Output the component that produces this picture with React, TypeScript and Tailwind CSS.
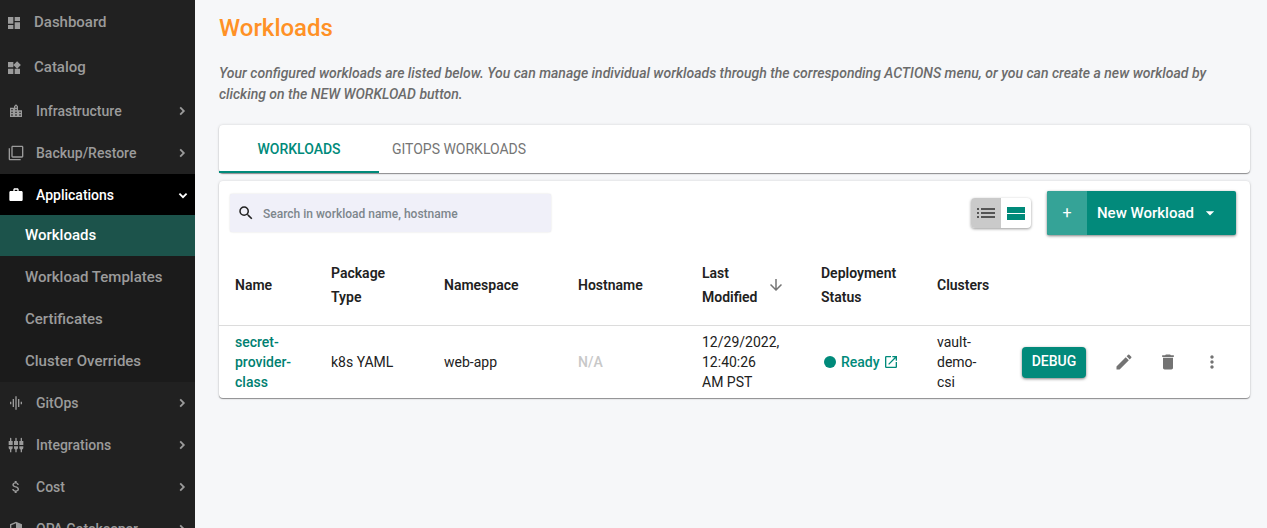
import React, { useState } from "react";
import {
    MdArrowDownward,
    MdArrowDropDown,
    MdAttachMoney,
    MdDashboard,
    MdDelete,
    MdEdit,
    MdFilterNone,
    MdGraphicEq,
    MdLocationCity,
    MdMoreVert,
    MdOpenInNew,
    MdSearch,
    MdSecurity,
    MdSettingsInputComponent,
    MdWidgets,
    MdWork,
} from "react-icons/md";
import type { IconType } from "react-icons";

type Workload = {
    name: string;
    packageType: string;
    namespace: string;
    hostname?: string;
    lastModified: string;
    status: string;
    cluster: string;
};

const workloads: Workload[] = [
    {
        name: "secret-provider-class",
        packageType: "k8s YAML",
        namespace: "web-app",
        lastModified: "12/29/2022, 12:40:26 AM PST",
        status: "Ready",
        cluster: "vault-demo-csi",
    },
];

const appLinks = ["Workloads", "Workload Templates", "Certificates", "Cluster Overrides"];

const Chevron: React.FC<{ open?: boolean }> = ({ open }) => (
    <svg viewBox="0 0 16 16" className="ml-auto size-4" fill="none" stroke="currentColor" strokeWidth="1.8">
        <path d={open ? "M4.4 6.6 8 10.2l3.6-3.6" : "M6.2 4.4 9.8 8l-3.6 3.6"} />
    </svg>
);

const TopLink: React.FC<{ icon: IconType; label: string }> = ({ icon: Icon, label }) => (
    <a href="#" className="flex h-[45px] shrink-0 items-center pl-[6px] text-[15px]">
        <Icon className="mr-3 size-4" />
        {label}
    </a>
);

const GroupButton: React.FC<{ icon: IconType; label: string }> = ({ icon: Icon, label }) => (
    <button className="flex h-[42px] w-full shrink-0 items-center pr-[5px] pl-2">
        <Icon className="mr-3 size-4" />
        {label}
        <Chevron />
    </button>
);

const Sidebar: React.FC = () => (
    <nav className="flex w-[195px] shrink-0 flex-col overflow-hidden bg-[#212121] text-sm font-medium text-[#9b9b9b]">
        <TopLink icon={MdDashboard} label="Dashboard" />
        <TopLink icon={MdWidgets} label="Catalog" />
        <GroupButton icon={MdLocationCity} label="Infrastructure" />
        <GroupButton icon={MdFilterNone} label="Backup/Restore" />

        <button className="flex h-[41px] w-full shrink-0 items-center bg-black pr-1 pl-2 text-white">
            <MdWork className="mr-3 size-4" />
            Applications
            <Chevron open />
        </button>
        <div className="flex shrink-0 flex-col gap-px bg-[#1b1b1b] text-[15px]">
            {appLinks.map((label) => (
                <a
                    key={label}
                    href="#"
                    className={`flex h-[41px] items-center pl-[25px] ${
                        label === "Workloads" ? "bg-[#1c534b] text-white" : ""
                    }`}
                >
                    {label}
                </a>
            ))}
        </div>

        <GroupButton icon={MdGraphicEq} label="GitOps" />
        <GroupButton icon={MdSettingsInputComponent} label="Integrations" />
        <GroupButton icon={MdAttachMoney} label="Cost" />
        <GroupButton icon={MdSecurity} label="OPA Gatekeeper" />
    </nav>
);

const ListIcon: React.FC = () => (
    <svg viewBox="0 0 18 10" className="h-[10px] w-[18px]" fill="currentColor">
        <path d="M0 0h2v2H0zM4 0h14v2H4zM0 4h2v2H0zM4 4h14v2H4zM0 8h2v2H0zM4 8h14v2H4z" />
    </svg>
);

const CardsIcon: React.FC = () => (
    <svg viewBox="0 0 18 13" className="h-[13px] w-[18px]" fill="currentColor">
        <path d="M0 0h18v6H0zM0 7h18v6H0z" />
    </svg>
);

const Toolbar: React.FC<{ query: string; onQuery: (value: string) => void }> = ({ query, onQuery }) => (
    <div className="flex items-center py-[10px] pr-[14px] pl-[11px]">
        <label className="flex h-[38px] w-[321px] items-center rounded-xs bg-[#f0f0f9] pl-[7px] shadow-[0_0_2px_rgba(0,0,0,0.15)]">
            <MdSearch className="mr-2 size-[18px] text-[#212121]" />
            <input
                type="text"
                aria-label="Search workloads"
                placeholder="Search in workload name, hostname"
                value={query}
                onChange={(e) => onQuery(e.target.value)}
                className="min-w-0 flex-1 bg-transparent pt-0.5 text-xs font-medium outline-none placeholder:text-[#7d868c]"
            />
        </label>

        <div className="mr-4 ml-auto flex overflow-hidden rounded-sm bg-white shadow-[0_1px_3px_rgba(0,0,0,0.4)]">
            <button aria-label="List view" className="flex size-[30px] items-center justify-center bg-[#cacaca] text-[#555]">
                <ListIcon />
            </button>
            <button aria-label="Card view" className="flex size-[30px] items-center justify-center text-[#008a7a]">
                <CardsIcon />
            </button>
        </div>

        <button className="flex h-11 items-center overflow-hidden rounded-xs bg-[#028a7b] pr-4 font-medium text-white shadow-[0_1px_3px_rgba(0,0,0,0.5)]">
            <span className="mr-[10px] flex h-full w-10 items-center justify-center bg-[#35a397] text-base font-normal">+</span>
            <span className="text-[15px]">New Workload</span>
            <MdArrowDropDown className="ml-[6px] size-5" />
        </button>
    </div>
);

const WorkloadRow: React.FC<{ item: Workload }> = ({ item }) => (
    <tr className="border-t border-[#dcdcdc]">
        <td className="px-4 py-1.5 font-medium">
            <a href="#" className="text-[#008071] hover:underline">{item.name}</a>
        </td>
        <td className="px-4 py-1.5">{item.packageType}</td>
        <td className="px-4 py-1.5">{item.namespace}</td>
        <td className="px-4 py-1.5">
            {item.hostname || <span className="font-medium text-[#c8c8c8]">N/A</span>}
        </td>
        <td className="py-1.5 pr-[25px] pl-4">{item.lastModified}</td>
        <td className="py-1.5 pl-[19px]">
            <a href="#" className="flex items-center font-medium text-[#008a7a]">
                <span className="mr-[5px] size-3 rounded-full bg-[#008a7a]" />
                {item.status}
                <MdOpenInNew className="ml-[3px] size-4" />
            </a>
        </td>
        <td className="px-4 py-1.5">{item.cluster}</td>
        <td className="py-1.5 pl-4">
            <div className="flex items-center text-[#737373]">
                <button className="mr-7 h-[31px] w-16 rounded-sm bg-[#028a7b] pb-0.5 font-medium text-white shadow-[0_1px_3px_rgba(0,0,0,0.5)]">
                    DEBUG
                </button>
                <div className="flex gap-6">
                    <button aria-label="Edit"><MdEdit className="size-5" /></button>
                    <button aria-label="Delete"><MdDelete className="size-5" /></button>
                    <button aria-label="More actions"><MdMoreVert className="size-5" /></button>
                </div>
            </div>
        </td>
    </tr>
);

export default function App() {
    const [tab, setTab] = useState("WORKLOADS");
    const [query, setQuery] = useState("");

    const rows = workloads.filter((w) => w.name.includes(query) || (w.hostname || "").includes(query));

    return (
        <div className="flex h-screen overflow-hidden bg-[#f6f7f9] font-[Roboto,sans-serif]">
            <Sidebar />

            <main className="min-w-0 flex-1 overflow-auto pt-3 pr-[17px] pl-6">
                <h1 className="text-2xl font-medium text-[#ff9126]">Workloads</h1>
                <p className="mt-[19px] text-sm leading-[21px] font-medium text-[#6b6b6b] italic">
                    Your configured workloads are listed below. You can manage individual workloads through the
                    corresponding ACTIONS menu, or you can create a new workload by clicking on the NEW WORKLOAD button.
                </p>

                <div className="mt-5 flex h-12 rounded-sm bg-white shadow-[0_1px_1px_rgba(0,0,0,0.4),0_0_3px_rgba(0,0,0,0.15)]">
                    {["WORKLOADS", "GITOPS WORKLOADS"].map((name) => (
                        <button
                            key={name}
                            onClick={() => setTab(name)}
                            className={`min-w-40 border-b-2 px-3 pt-0.5 text-sm ${
                                tab === name
                                    ? "border-[#008a7a] font-medium text-[#008a7a]"
                                    : "border-transparent text-[#757575]"
                            }`}
                        >
                            {name}
                        </button>
                    ))}
                </div>

                <section className="mt-2 rounded-sm bg-white shadow-[0_1px_1px_rgba(0,0,0,0.4),0_0_3px_rgba(0,0,0,0.15)]">
                    <Toolbar query={query} onQuery={setQuery} />

                    <table className="w-full table-fixed text-left text-sm text-[#212121]">
                        <thead className="leading-6">
                            <tr>
                                <th className="w-[96px] px-4 py-4 font-semibold">Name</th>
                                <th className="w-[113px] px-4 py-4 font-semibold">Package Type</th>
                                <th className="w-[134px] px-4 py-4 font-semibold">Namespace</th>
                                <th className="w-[124px] px-4 py-4 font-semibold">Hostname</th>
                                <th className="w-[119px] px-4 py-4 font-semibold">
                                    <button className="flex w-full items-center text-left">
                                        <span className="w-[65px]">Last Modified</span>
                                        <MdArrowDownward className="size-[18px] shrink-0 text-[#757575]" />
                                    </button>
                                </th>
                                <th className="w-[116px] px-4 py-4 font-semibold">Deployment Status</th>
                                <th className="w-[85px] px-4 py-4 font-semibold">Clusters</th>
                                <th className="w-[244px]" aria-label="Actions" />
                            </tr>
                        </thead>
                        <tbody>
                            {rows.map((item) => (
                                <WorkloadRow key={item.name} item={item} />
                            ))}
                        </tbody>
                    </table>
                </section>
            </main>
        </div>
    );
}
